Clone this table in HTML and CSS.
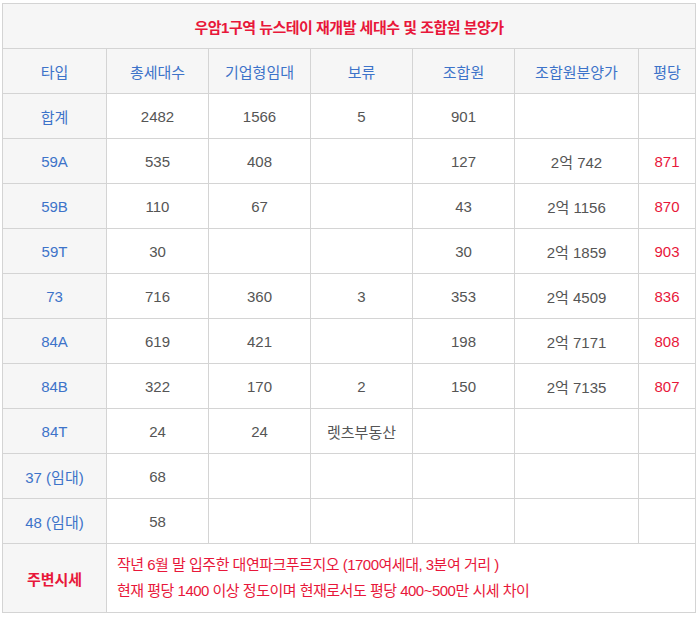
FILE: index.html
```html
<!DOCTYPE html>
<html lang="ko">
<head>
<meta charset="utf-8">
<link rel="stylesheet" href="styles.css">
</head>
<body>
<table class="tbl">
  <colgroup>
    <col class="c1"><col class="c2"><col class="c3"><col class="c4"><col class="c5"><col class="c6"><col class="c7">
  </colgroup>
  <tr class="title"><td colspan="7">우암1구역 뉴스테이 재개발 세대수 및 조합원 분양가</td></tr>
  <tr class="head">
    <td>타입</td><td>총세대수</td><td>기업형임대</td><td>보류</td><td>조합원</td><td>조합원분양가</td><td>평당</td>
  </tr>
  <tr><th>합계</th><td>2482</td><td>1566</td><td>5</td><td>901</td><td></td><td></td></tr>
  <tr><th>59A</th><td>535</td><td>408</td><td></td><td>127</td><td>2억 742</td><td class="red">871</td></tr>
  <tr><th>59B</th><td>110</td><td>67</td><td></td><td>43</td><td>2억 1156</td><td class="red">870</td></tr>
  <tr><th>59T</th><td>30</td><td></td><td></td><td>30</td><td>2억 1859</td><td class="red">903</td></tr>
  <tr><th>73</th><td>716</td><td>360</td><td>3</td><td>353</td><td>2억 4509</td><td class="red">836</td></tr>
  <tr><th>84A</th><td>619</td><td>421</td><td></td><td>198</td><td>2억 7171</td><td class="red">808</td></tr>
  <tr><th>84B</th><td>322</td><td>170</td><td>2</td><td>150</td><td>2억 7135</td><td class="red">807</td></tr>
  <tr><th>84T</th><td>24</td><td>24</td><td>렛츠부동산</td><td></td><td></td><td></td></tr>
  <tr><th>37 (임대)</th><td>68</td><td></td><td></td><td></td><td></td><td></td></tr>
  <tr><th>48 (임대)</th><td>58</td><td></td><td></td><td></td><td></td><td></td></tr>
  <tr class="market">
    <th class="mk">주변시세</th>
    <td colspan="6" class="note">작년 6월 말 입주한 대연파크푸르지오 (1700여세대, 3분여 거리 )<br>현재 평당 1400 이상 정도이며 현재로서도 평당 400~500만 시세 차이</td>
  </tr>
</table>
</body>
</html>
```

FILE: styles.css
```css
html, body {
  margin: 0;
  padding: 0;
  background: #ffffff;
}
body {
  padding: 3px 0 0 2px;
  font-family: "Liberation Sans", "Noto Sans CJK KR", sans-serif;
  font-size: 15px;
}
.tbl {
  border-collapse: collapse;
  width: 693px;
  table-layout: fixed;
}
.c1 { width: 104px; }
.c2 { width: 102px; }
.c3 { width: 102px; }
.c4 { width: 102px; }
.c5 { width: 102px; }
.c6 { width: 124px; }
.c7 { width: 57px; }
.tbl td, .tbl th {
  border: 1px solid #d4d4d4;
  height: 44px;
  padding: 0;
  text-align: center;
  vertical-align: middle;
  color: #555555;
  font-weight: normal;
  font-size: 15px;
}
.tbl th {
  background: #f6f6f6;
  color: #3d73c9;
}
.title td {
  background: #f6f6f6;
  color: #e8173a;
  font-weight: bold;
  letter-spacing: -0.5px;
}
.head td {
  background: #f6f6f6;
  color: #3d73c9;
}
.tbl td.red {
  color: #e8173a;
}
.market th, .market td {
  height: 68px;
}
.tbl th.mk {
  color: #e8173a;
  font-weight: bold;
}
.tbl td.note {
  text-align: left;
  color: #e8173a;
  padding-left: 10px;
  line-height: 26px;
  letter-spacing: -0.5px;
}
```
